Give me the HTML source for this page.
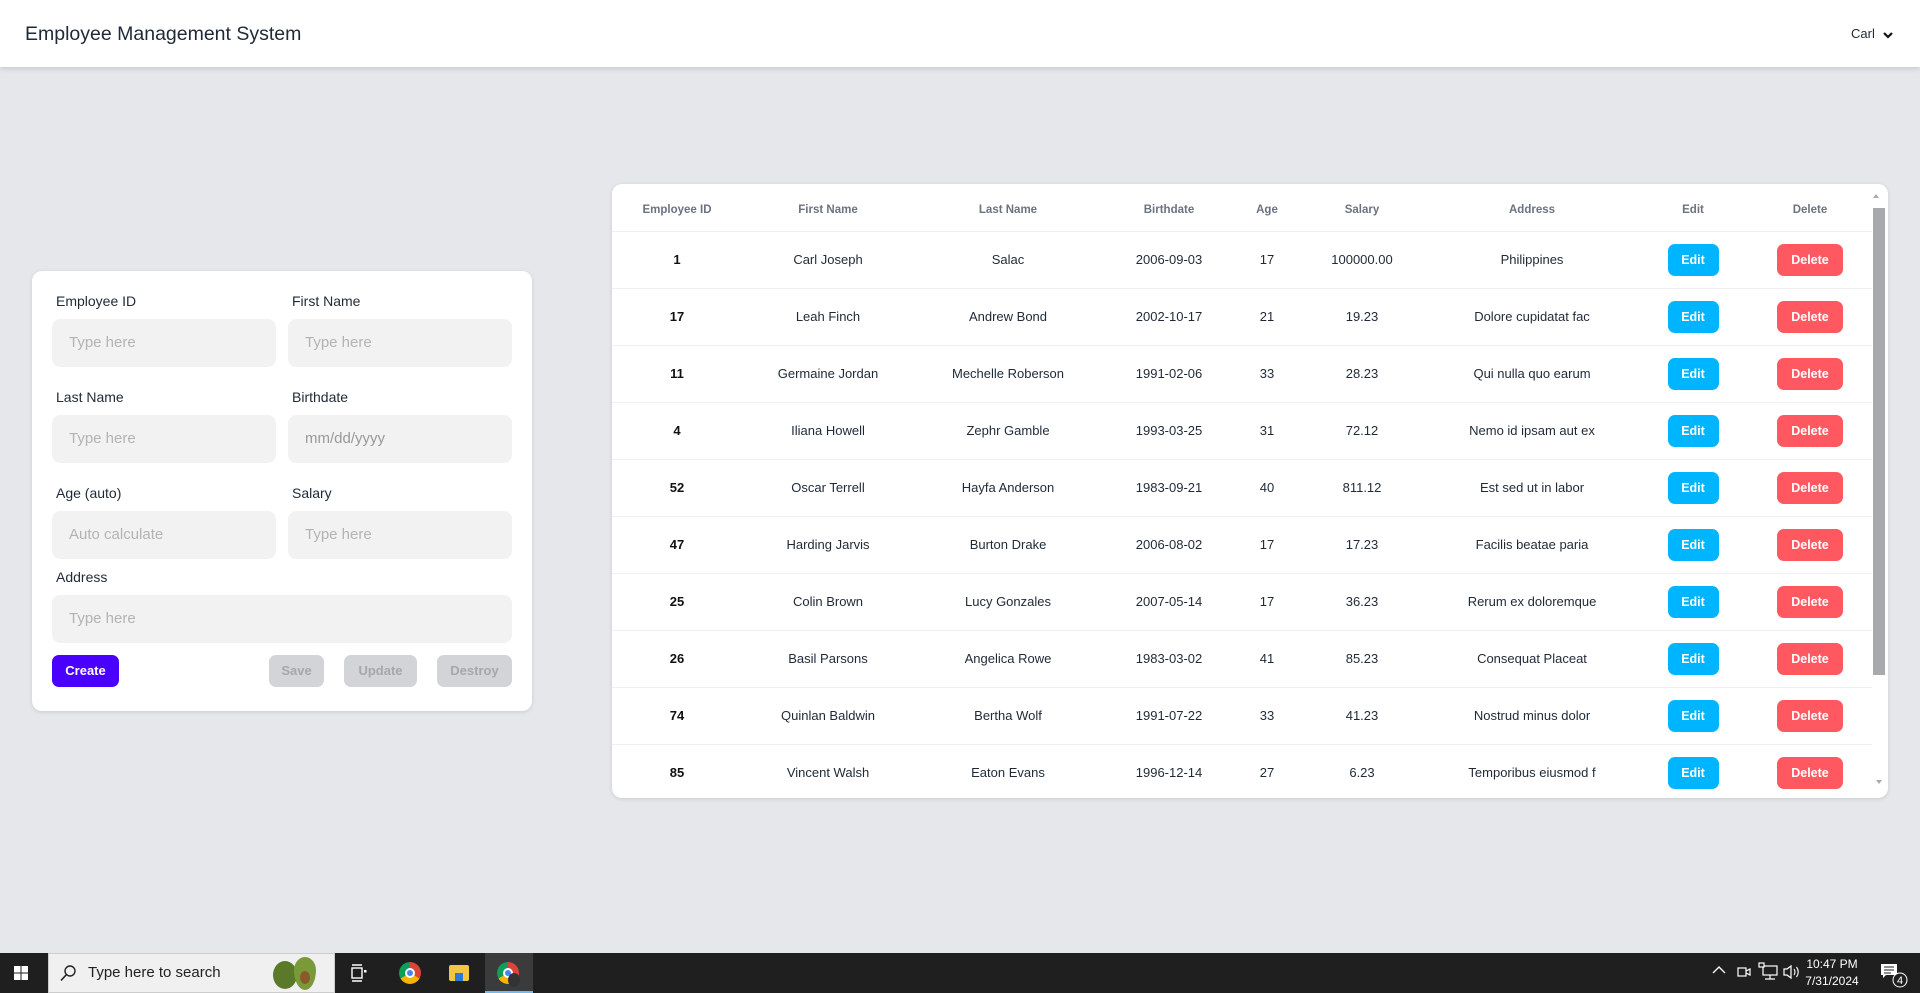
<!DOCTYPE html>
<html><head><meta charset="utf-8"><style>
*{box-sizing:border-box;margin:0;padding:0}
body{width:1920px;height:993px;background:#e5e7eb;font-family:"Liberation Sans",sans-serif;position:relative;overflow:hidden;color:#1f2937}
.hdr{position:absolute;left:0;top:0;width:1920px;height:67px;background:#fff;box-shadow:0 2px 5px rgba(0,0,0,.12)}
.hdr .t{position:absolute;left:25px;top:23px;font-size:19.5px;color:#1f2937}
.hdr .u{position:absolute;left:1851px;top:26px;font-size:13px;color:#1f2937}
.card{position:absolute;background:#fff;border-radius:10px;box-shadow:0 1px 4px rgba(0,0,0,.12)}
.lbl{position:absolute;font-size:14px;color:#1f2937}
.inp{position:absolute;height:48px;background:#f2f2f2;border-radius:8px;font-size:15px;color:#b3b3b3;padding-left:17px;line-height:48px}
.btn{position:absolute;height:32px;border-radius:7px;font-size:13px;font-weight:bold;text-align:center;line-height:32px}
.dis{background:#d3d4d7;color:#a5a7ab}
table{border-collapse:collapse;table-layout:fixed;position:absolute;left:0;top:0}
th{height:47px;padding-top:6px;font-size:11.5px;color:#6b7280;font-weight:bold;text-align:center;border-bottom:1px solid #eef0f2}
td{height:57px;font-size:13px;text-align:center;border-bottom:1px solid #eef0f2;color:#1f2937}
td.id{font-weight:bold;color:#111}
.e,.d{display:inline-block;height:32px;line-height:32px;border-radius:7px;color:#fff;font-weight:bold;font-size:12.5px}
.e{width:51px;background:#00b5ff}
.d{width:66px;background:#ff5861}
.tb{position:absolute;left:0;top:953px;width:1920px;height:40px;background:#1f1f1f}
</style></head><body>
<div class="hdr"><div class="t">Employee Management System</div><div class="u">Carl <svg width="12" height="10" viewBox="0 0 12 10" style="vertical-align:middle;margin-left:4px"><path d="M2 3 L6 7 L10 3" stroke="#111" stroke-width="2.2" fill="none"/></svg></div></div>

<div class="card" style="left:32px;top:271px;width:500px;height:440px"></div>
<div class="lbl" style="left:56px;top:293px">Employee ID</div>
<div class="lbl" style="left:292px;top:293px">First Name</div>
<div class="inp" style="left:52px;top:319px;width:224px">Type here</div>
<div class="inp" style="left:288px;top:319px;width:224px">Type here</div>
<div class="lbl" style="left:56px;top:389px">Last Name</div>
<div class="lbl" style="left:292px;top:389px">Birthdate</div>
<div class="inp" style="left:52px;top:415px;width:224px">Type here</div>
<div class="inp" style="left:288px;top:415px;width:224px;color:#999">mm/dd/yyyy</div>
<div class="lbl" style="left:56px;top:485px">Age (auto)</div>
<div class="lbl" style="left:292px;top:485px">Salary</div>
<div class="inp" style="left:52px;top:511px;width:224px">Auto calculate</div>
<div class="inp" style="left:288px;top:511px;width:224px">Type here</div>
<div class="lbl" style="left:56px;top:569px">Address</div>
<div class="inp" style="left:52px;top:595px;width:460px">Type here</div>
<div class="btn" style="left:52px;top:655px;width:67px;background:#4a00ff;color:#fff">Create</div>
<div class="btn dis" style="left:269px;top:655px;width:55px">Save</div>
<div class="btn dis" style="left:344px;top:655px;width:73px">Update</div>
<div class="btn dis" style="left:437px;top:655px;width:75px">Destroy</div>

<div class="card" style="left:612px;top:184px;width:1276px;height:614px;overflow:hidden">
<table>
<colgroup><col style="width:130px"><col style="width:172px"><col style="width:188px"><col style="width:134px"><col style="width:62px"><col style="width:128px"><col style="width:212px"><col style="width:110px"><col style="width:124px"></colgroup>
<tr><th>Employee ID</th><th>First Name</th><th>Last Name</th><th>Birthdate</th><th>Age</th><th>Salary</th><th>Address</th><th>Edit</th><th>Delete</th></tr>
<tr><td class="id">1</td><td>Carl Joseph</td><td>Salac</td><td>2006-09-03</td><td>17</td><td>100000.00</td><td>Philippines</td><td><span class="e">Edit</span></td><td><span class="d">Delete</span></td></tr>
<tr><td class="id">17</td><td>Leah Finch</td><td>Andrew Bond</td><td>2002-10-17</td><td>21</td><td>19.23</td><td>Dolore cupidatat fac</td><td><span class="e">Edit</span></td><td><span class="d">Delete</span></td></tr>
<tr><td class="id">11</td><td>Germaine Jordan</td><td>Mechelle Roberson</td><td>1991-02-06</td><td>33</td><td>28.23</td><td>Qui nulla quo earum</td><td><span class="e">Edit</span></td><td><span class="d">Delete</span></td></tr>
<tr><td class="id">4</td><td>Iliana Howell</td><td>Zephr Gamble</td><td>1993-03-25</td><td>31</td><td>72.12</td><td>Nemo id ipsam aut ex</td><td><span class="e">Edit</span></td><td><span class="d">Delete</span></td></tr>
<tr><td class="id">52</td><td>Oscar Terrell</td><td>Hayfa Anderson</td><td>1983-09-21</td><td>40</td><td>811.12</td><td>Est sed ut in labor</td><td><span class="e">Edit</span></td><td><span class="d">Delete</span></td></tr>
<tr><td class="id">47</td><td>Harding Jarvis</td><td>Burton Drake</td><td>2006-08-02</td><td>17</td><td>17.23</td><td>Facilis beatae paria</td><td><span class="e">Edit</span></td><td><span class="d">Delete</span></td></tr>
<tr><td class="id">25</td><td>Colin Brown</td><td>Lucy Gonzales</td><td>2007-05-14</td><td>17</td><td>36.23</td><td>Rerum ex doloremque</td><td><span class="e">Edit</span></td><td><span class="d">Delete</span></td></tr>
<tr><td class="id">26</td><td>Basil Parsons</td><td>Angelica Rowe</td><td>1983-03-02</td><td>41</td><td>85.23</td><td>Consequat Placeat</td><td><span class="e">Edit</span></td><td><span class="d">Delete</span></td></tr>
<tr><td class="id">74</td><td>Quinlan Baldwin</td><td>Bertha Wolf</td><td>1991-07-22</td><td>33</td><td>41.23</td><td>Nostrud minus dolor</td><td><span class="e">Edit</span></td><td><span class="d">Delete</span></td></tr>
<tr><td class="id">85</td><td>Vincent Walsh</td><td>Eaton Evans</td><td>1996-12-14</td><td>27</td><td>6.23</td><td>Temporibus eiusmod f</td><td><span class="e">Edit</span></td><td><span class="d">Delete</span></td></tr>
</table>
<div style="position:absolute;left:1261px;top:10px;width:0;height:0;border-left:3px solid transparent;border-right:3px solid transparent;border-bottom:4px solid #aaa"></div>
<div style="position:absolute;left:1261px;top:24px;width:12px;height:467px;background:#a8a9ad"></div>
<div style="position:absolute;left:1264px;top:596px;width:0;height:0;border-left:3px solid transparent;border-right:3px solid transparent;border-top:4px solid #aaa"></div>
</div>

<div class="tb">
<svg style="position:absolute;left:14px;top:13px" width="14" height="14" viewBox="0 0 14 14"><rect x="0" y="0" width="6.5" height="6.5" fill="#fff"/><rect x="7.5" y="0" width="6.5" height="6.5" fill="#fff"/><rect x="0" y="7.5" width="6.5" height="6.5" fill="#fff"/><rect x="7.5" y="7.5" width="6.5" height="6.5" fill="#fff"/></svg>
<div style="position:absolute;left:48px;top:0;width:287px;height:40px;background:#f0f0f0;border:1px solid #ccc"></div>
<svg style="position:absolute;left:60px;top:12px" width="16" height="17" viewBox="0 0 16 17"><circle cx="10" cy="6" r="5" stroke="#222" stroke-width="1.4" fill="none"/><path d="M6.5 9.5 L1 15.5" stroke="#222" stroke-width="1.6"/></svg>
<div style="position:absolute;left:88px;top:11px;font-size:15px;color:#222">Type here to search</div>
<div style="position:absolute;left:273px;top:8px;width:24px;height:28px;border-radius:50%;background:#5a7a2a"></div>
<div style="position:absolute;left:294px;top:4px;width:22px;height:33px;border-radius:50% 50% 50% 50%/40% 40% 60% 60%;background:#7a9a3a"></div>
<div style="position:absolute;left:300px;top:18px;width:10px;height:13px;border-radius:50%;background:#8a5a2a"></div>
<svg style="position:absolute;left:351px;top:11px" width="16" height="18" viewBox="0 0 16 18"><rect x="1" y="4" width="10" height="10" stroke="#fff" fill="none" stroke-width="1.4"/><path d="M1 1h10M1 17h10" stroke="#fff" stroke-width="1.4"/><rect x="13" y="6" width="2.5" height="2.5" fill="#fff"/></svg>
<div style="position:absolute;left:399px;top:9px;width:22px;height:22px;border-radius:50%;background:conic-gradient(#db4437 0 120deg,#f4b400 120deg 240deg,#0f9d58 240deg 360deg)"></div>
<div style="position:absolute;left:405px;top:15px;width:10px;height:10px;border-radius:50%;background:#4285f4;border:2px solid #fff"></div>
<div style="position:absolute;left:449px;top:12px;width:20px;height:16px;background:#f4c542;border-radius:2px"></div>
<div style="position:absolute;left:455px;top:20px;width:8px;height:8px;background:#2b7bd6"></div>
<div style="position:absolute;left:485px;top:0;width:48px;height:40px;background:#3b3b3b;border-bottom:2px solid #76b9ed"></div>
<div style="position:absolute;left:497px;top:9px;width:22px;height:22px;border-radius:50%;background:conic-gradient(#db4437 0 120deg,#f4b400 120deg 240deg,#0f9d58 240deg 360deg)"></div>
<div style="position:absolute;left:503px;top:15px;width:10px;height:10px;border-radius:50%;background:#4285f4;border:2px solid #fff"></div>
<div style="position:absolute;left:508px;top:20px;width:12px;height:14px;border-radius:50%;background:#333"></div>
<svg style="position:absolute;left:1712px;top:12px" width="14" height="10" viewBox="0 0 14 10"><path d="M1 8 L7 2 L13 8" stroke="#fff" stroke-width="1.4" fill="none"/></svg>
<svg style="position:absolute;left:1737px;top:10px" width="14" height="18" viewBox="0 0 14 18"><rect x="1" y="5" width="8" height="8" stroke="#fff" fill="none" stroke-width="1.2"/><path d="M9 8 L13 6 V12 L9 10" stroke="#fff" fill="none" stroke-width="1.2"/></svg>
<svg style="position:absolute;left:1758px;top:9px" width="20" height="20" viewBox="0 0 20 20"><rect x="5" y="4" width="14" height="9" stroke="#fff" fill="none" stroke-width="1.2"/><rect x="1" y="1" width="5" height="4" stroke="#fff" fill="#1f1f1f" stroke-width="1.2"/><path d="M12 13v4M7 17h10" stroke="#fff" stroke-width="1.2"/></svg>
<svg style="position:absolute;left:1782px;top:10px" width="18" height="18" viewBox="0 0 18 18"><path d="M2 6h3l4-3v12l-4-3H2z" stroke="#fff" fill="none" stroke-width="1.2"/><path d="M12 6q2 3 0 6M14.5 4q3.5 5 0 10" stroke="#fff" fill="none" stroke-width="1.1"/></svg>
<div style="position:absolute;left:1800px;top:3px;width:64px;text-align:center;font-size:12px;color:#fff;line-height:17px">10:47 PM<br>7/31/2024</div>
<svg style="position:absolute;left:1880px;top:9px" width="30" height="26" viewBox="0 0 30 26"><path d="M1 2h16v11H6l-3 3v-3H1z" fill="#fff"/><path d="M4 5h10M4 8h10M4 11h7" stroke="#1f1f1f" stroke-width="1"/><circle cx="20" cy="18" r="7" fill="#1f1f1f" stroke="#fff" stroke-width="1"/><text x="20" y="22" font-size="11" fill="#fff" text-anchor="middle" font-family="Liberation Sans">4</text></svg>
</div>
</body></html>
